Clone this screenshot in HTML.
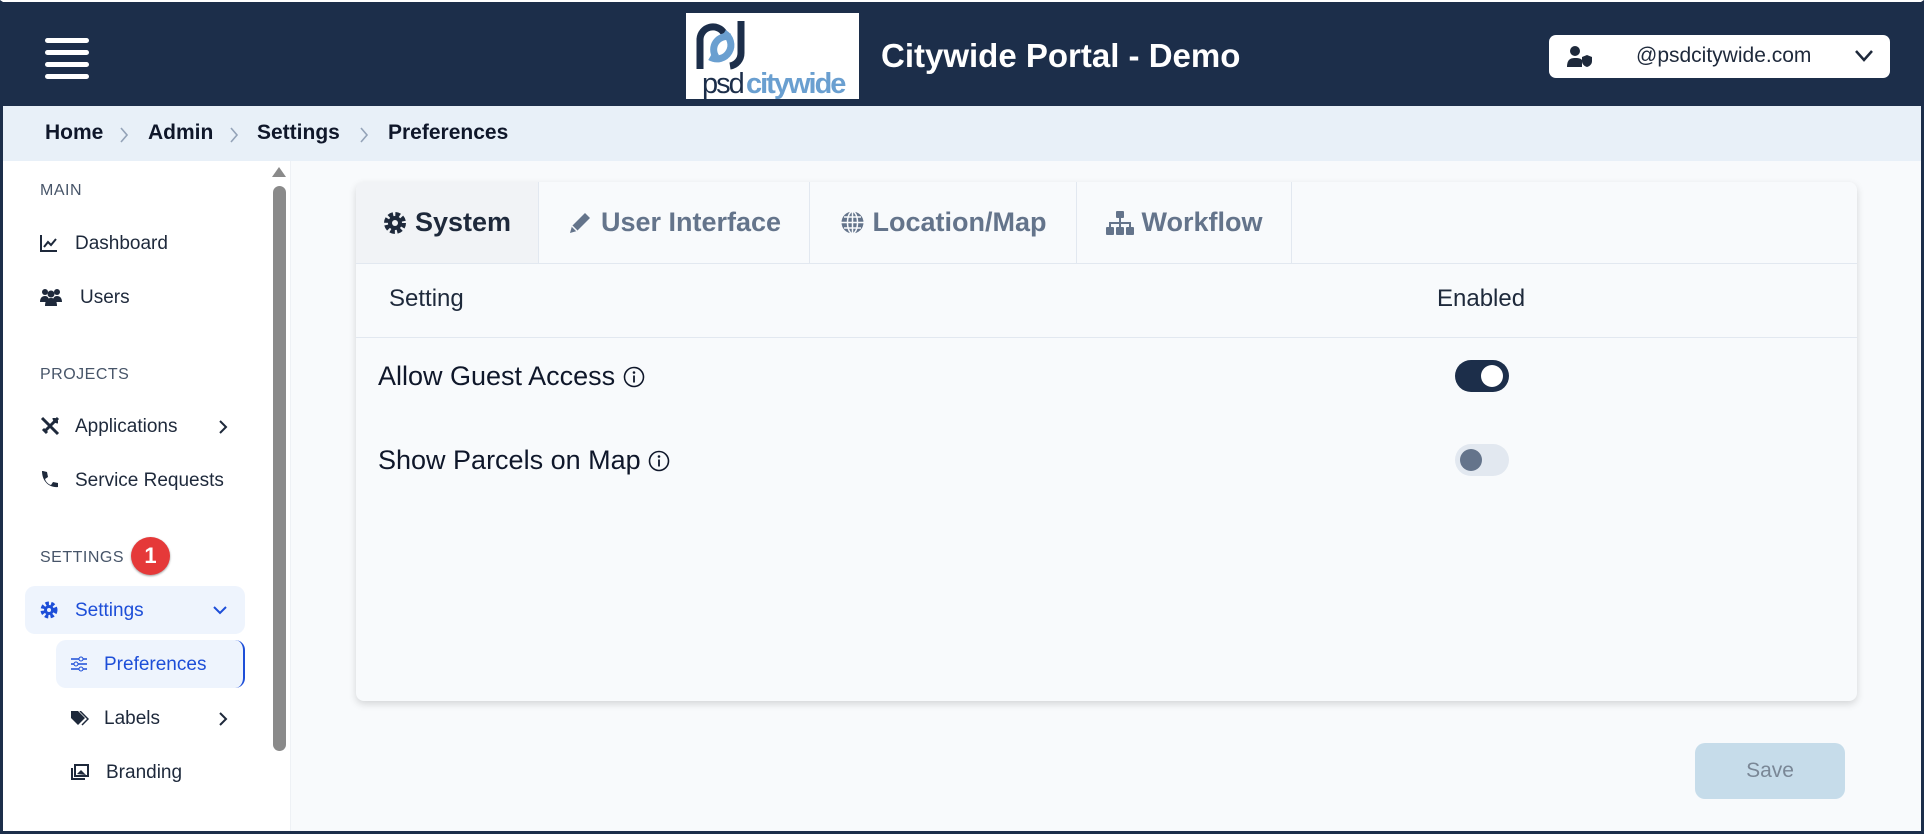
<!DOCTYPE html>
<html><head><meta charset="utf-8"><style>
*{box-sizing:border-box;margin:0;padding:0}
body{width:1924px;height:834px;overflow:hidden;font-family:"Liberation Sans",sans-serif;background:#f8fafc;position:relative;color:#1e293b}
.frame{position:absolute;inset:0;border:3px solid #1c2e4a;border-top:2px solid #fff;pointer-events:none;z-index:9}
.hdr{position:absolute;left:0;top:0;width:1924px;height:106px;background:#1c2e4a;border-top:2px solid #fff}
.burger{position:absolute;left:45px;top:36px;width:44px}
.burger i{display:block;height:5px;background:#fff;border-radius:3px;margin-bottom:7px}
.logo{position:absolute;left:686px;top:11px;width:173px;height:86px;background:#fff}
.title{position:absolute;left:881px;top:35px;color:#fff;font-weight:bold;font-size:33px}
.user{position:absolute;left:1549px;top:33px;width:341px;height:43px;background:#fff;border-radius:7px;font-size:21px;color:#1e293b}
.bc{position:absolute;left:0;top:106px;width:1924px;height:55px;background:#e8f0f8;font-size:21px;font-weight:bold;color:#0f172a}
.bc span{position:absolute;top:15px}
.bc svg{position:absolute;top:21px}
.side{position:absolute;left:0;top:161px;width:291px;height:673px;background:#fff;border-right:1px solid #eef1f5}
.sb{position:absolute;left:273px;top:25px;width:13px;height:565px;background:#8a8a8a;border-radius:7px}
.lab{position:absolute;left:40px;font-size:16px;color:#475569;letter-spacing:.5px}
.it{position:absolute;left:75px;font-size:19px;color:#1e293b}
.ic{position:absolute;left:40px}
.card{position:absolute;left:356px;top:182px;width:1501px;height:519px;background:#f8fafc;border-radius:8px;box-shadow:0 3px 8px rgba(0,0,0,.15)}
.tab{position:absolute;top:0;height:81px;border-right:1px solid #e2e8f0;font-size:27px;font-weight:bold;color:#64748b;display:flex;align-items:center;justify-content:center;gap:8px}
.row{position:absolute;left:22px;font-size:27px;color:#0f172a}
.tg{position:absolute;left:1099px;width:54px;height:32px;border-radius:16px}
</style></head><body>
<div class="hdr">
<div class="burger"><i></i><i></i><i></i><i></i></div>
<div class="logo"><svg width="173" height="86" viewBox="0 0 173 86">
<path d="M14 56 V26 a13 13 0 0 1 24 -6" stroke="#1c2e4a" stroke-width="7" fill="none"/>
<path d="M38 20 a13 13 0 0 1 -14 24" stroke="#6a9fd0" stroke-width="7" fill="none"/>
<path d="M30 44 a13 13 0 0 1 14 -20" stroke="#6a9fd0" stroke-width="7" fill="none"/>
<path d="M55 8 V40 a13 13 0 0 1 -11 13" stroke="#1c2e4a" stroke-width="7" fill="none"/>
<text x="16" y="80" font-family="Liberation Sans" font-size="29" fill="#1c2e4a" letter-spacing="-2">psd</text>
<text x="60" y="80" font-family="Liberation Sans" font-weight="bold" font-size="29" fill="#6a9fd0" letter-spacing="-2">citywide</text>
</svg></div>
<div class="title">Citywide Portal - Demo</div>
<div class="user">
<svg style="position:absolute;left:18px;top:11px" width="26" height="22" viewBox="0 0 26 22"><circle cx="8" cy="5" r="5" fill="#1e293b"/><path d="M0 21c0-7 3-9 8-9s6 1 7 2v7z" fill="#1e293b"/><path d="M15 11l5-2 5 2v4c0 3-2 5-5 6-3-1-5-3-5-6z" fill="#1e293b"/></svg>
<span style="position:absolute;left:52px;top:9px">&nbsp;&nbsp;&nbsp;&nbsp;&nbsp;&nbsp;@psdcitywide.com</span>
<svg style="position:absolute;left:305px;top:14px" width="20" height="14" viewBox="0 0 20 14"><path d="M2 2l8 9 8-9" stroke="#1e293b" stroke-width="2.5" fill="none"/></svg>
</div>
</div>
<div class="bc"><span style="left:45px">Home</span><svg style="left:119px" width="10" height="16" viewBox="0 0 10 16"><path d="M2 1l6 7-6 7" stroke="#94a3b8" stroke-width="1.6" fill="none"/></svg><span style="left:148px">Admin</span><svg style="left:229px" width="10" height="16" viewBox="0 0 10 16"><path d="M2 1l6 7-6 7" stroke="#94a3b8" stroke-width="1.6" fill="none"/></svg><span style="left:257px">Settings</span><svg style="left:359px" width="10" height="16" viewBox="0 0 10 16"><path d="M2 1l6 7-6 7" stroke="#94a3b8" stroke-width="1.6" fill="none"/></svg><span style="left:388px">Preferences</span></div>
<div class="side">
<div style="position:absolute;left:272px;top:6px;width:0;height:0;border:7px solid transparent;border-bottom:10px solid #8a8a8a;border-top:0"></div>
<div class="sb"></div>
<div class="lab" style="top:21px">MAIN</div>
<svg class="ic" style="top:73px" width="18" height="18" viewBox="0 0 18 18"><path d="M1 1v16h16M4 13l4-5 3 3 5-6" stroke="#1e293b" stroke-width="2" fill="none"/></svg>
<div class="it" style="top:72px">Dashboard</div>
<svg class="ic" style="top:127px" width="22" height="18" viewBox="0 0 22 18"><circle cx="5" cy="4" r="3" fill="#1e293b"/><circle cx="17" cy="4" r="3" fill="#1e293b"/><circle cx="11" cy="6" r="3.5" fill="#1e293b"/><path d="M0 14c0-4 2-6 5-6s4 2 4 6zM13 14c0-4 1-6 4-6s5 2 5 6zM5 18c0-5 2-8 6-8s6 3 6 8z" fill="#1e293b"/></svg>
<div class="it" style="top:126px;left:80px">Users</div>
<div class="lab" style="top:205px">PROJECTS</div>
<svg class="ic" style="top:255px" width="20" height="20" viewBox="0 0 20 20"><path d="M2 2l16 16M18 2L6 14M3 13l4 4M14 2a4 4 0 0 0 4 4" stroke="#1e293b" stroke-width="3" fill="none"/></svg>
<div class="it" style="top:255px">Applications</div>
<svg style="position:absolute;left:218px;top:258px" width="10" height="16" viewBox="0 0 10 16"><path d="M2 2l6 6-6 6" stroke="#1e293b" stroke-width="2" fill="none"/></svg>
<svg class="ic" style="top:309px" width="18" height="20" viewBox="0 0 18 20"><path d="M3 1l4 1 1 5-3 2c1 3 3 5 6 6l2-3 5 1v4c-9 1-16-6-16-16z" fill="#1e293b"/></svg>
<div class="it" style="top:309px">Service Requests</div>
<div class="lab" style="top:388px">SETTINGS</div>
<div style="position:absolute;left:131px;top:376px;width:39px;height:38px;border-radius:50%;background:#e53939;color:#fff;font-weight:bold;font-size:22px;text-align:center;line-height:38px;box-shadow:0 1px 2px rgba(0,0,0,.4)">1</div>
<div style="position:absolute;left:25px;top:425px;width:220px;height:48px;background:#eef4fd;border-radius:10px"></div>
<svg class="ic" style="top:440px" width="18" height="18" viewBox="0 0 18 18"><circle cx="9" cy="9" r="6" fill="none" stroke="#1d4ed8" stroke-width="5" stroke-dasharray="3 2"/><circle cx="9" cy="9" r="5" fill="#1d4ed8"/><circle cx="9" cy="9" r="2" fill="#eef4fd"/></svg>
<div class="it" style="top:439px;color:#1d4ed8">Settings</div>
<svg style="position:absolute;left:212px;top:444px" width="16" height="10" viewBox="0 0 16 10"><path d="M2 2l6 6 6-6" stroke="#1d4ed8" stroke-width="2" fill="none"/></svg>
<div style="position:absolute;left:56px;top:479px;width:189px;height:48px;background:#eef4fd;border-radius:10px;border-right:2px solid #1d4ed8"></div>
<svg style="position:absolute;left:71px;top:495px" width="16" height="16" viewBox="0 0 16 16"><path d="M0 3h16M0 8h16M0 13h16" stroke="#1d4ed8" stroke-width="1.6"/><circle cx="10" cy="3" r="2" fill="#eef4fd" stroke="#1d4ed8"/><circle cx="5" cy="8" r="2" fill="#eef4fd" stroke="#1d4ed8"/><circle cx="10" cy="13" r="2" fill="#eef4fd" stroke="#1d4ed8"/></svg>
<div class="it" style="top:493px;left:104px;color:#1d4ed8">Preferences</div>
<svg style="position:absolute;left:71px;top:550px" width="18" height="16" viewBox="0 0 18 16"><path d="M0 0h7l7 7-7 7-7-7z" fill="#1e293b"/><path d="M9 0l8 8-6 6" stroke="#1e293b" stroke-width="1.5" fill="none"/></svg>
<div class="it" style="top:547px;left:104px">Labels</div>
<svg style="position:absolute;left:218px;top:550px" width="10" height="16" viewBox="0 0 10 16"><path d="M2 2l6 6-6 6" stroke="#1e293b" stroke-width="2" fill="none"/></svg>
<svg style="position:absolute;left:71px;top:603px" width="18" height="16" viewBox="0 0 18 16"><rect x="4" y="1" width="13" height="11" fill="none" stroke="#1e293b" stroke-width="2"/><path d="M1 4v11h13" stroke="#1e293b" stroke-width="2" fill="none"/><path d="M6 10l4-4 5 5z" fill="#1e293b"/></svg>
<div class="it" style="top:601px;left:106px">Branding</div>
</div>
<div class="card">
<div class="tab" style="left:0;width:183px;background:#f1f3f6;color:#1e293b;border-radius:8px 0 0 0"><svg width="24" height="24" viewBox="0 0 24 24"><circle cx="12" cy="12" r="8" fill="none" stroke="#1e293b" stroke-width="6" stroke-dasharray="4.2 2.1"/><circle cx="12" cy="12" r="7" fill="#1e293b"/><circle cx="12" cy="12" r="3" fill="#f1f3f6"/></svg>System</div>
<div class="tab" style="left:183px;width:271px"><svg width="26" height="26" viewBox="0 0 26 26"><path d="M3 23l2-7L18 3l5 5L10 21z" fill="#64748b"/><path d="M5 16l5 5" stroke="#f8fafc" stroke-width="1.5"/></svg>User Interface</div>
<div class="tab" style="left:454px;width:267px"><svg width="25" height="25" viewBox="0 0 25 25"><circle cx="12.5" cy="12.5" r="11" fill="#64748b"/><path d="M1.5 12.5h22M12.5 1.5v22M4 7h17M4 18h17" stroke="#f8fafc" stroke-width="1.5"/><ellipse cx="12.5" cy="12.5" rx="5" ry="11" fill="none" stroke="#f8fafc" stroke-width="1.5"/></svg>Location/Map</div>
<div class="tab" style="left:721px;width:215px"><svg width="28" height="24" viewBox="0 0 28 24"><rect x="10" y="0" width="8" height="7" rx="1" fill="#64748b"/><path d="M14 7v5M4 17v-5h20v5M14 12v5" stroke="#64748b" stroke-width="2" fill="none"/><rect x="0" y="16" width="8" height="8" rx="1" fill="#64748b"/><rect x="10" y="16" width="8" height="8" rx="1" fill="#64748b"/><rect x="20" y="16" width="8" height="8" rx="1" fill="#64748b"/></svg>Workflow</div>
<div style="position:absolute;left:0;top:81px;width:1501px;border-top:1px solid #e2e8f0"></div>
<div style="position:absolute;left:33px;top:103px;font-size:24px;color:#1e293b">Setting</div>
<div style="position:absolute;left:1081px;top:103px;font-size:24px;color:#1e293b">Enabled</div>
<div style="position:absolute;left:0;top:155px;width:1501px;border-top:1px solid #e2e8f0"></div>
<div class="row" style="top:179px">Allow Guest Access <svg width="22" height="22" viewBox="0 0 22 22" style="vertical-align:-3px"><circle cx="11" cy="11" r="9.5" fill="none" stroke="#0f172a" stroke-width="1.6"/><circle cx="11" cy="6.5" r="1.3" fill="#0f172a"/><path d="M11 9.5v7" stroke="#0f172a" stroke-width="1.8"/></svg></div>
<div class="tg" style="top:178px;background:#1c2e4a"><div style="position:absolute;left:26px;top:5px;width:22px;height:22px;border-radius:50%;background:#fff"></div></div>
<div class="row" style="top:263px">Show Parcels on Map <svg width="22" height="22" viewBox="0 0 22 22" style="vertical-align:-3px"><circle cx="11" cy="11" r="9.5" fill="none" stroke="#0f172a" stroke-width="1.6"/><circle cx="11" cy="6.5" r="1.3" fill="#0f172a"/><path d="M11 9.5v7" stroke="#0f172a" stroke-width="1.8"/></svg></div>
<div class="tg" style="top:262px;background:#e2e8f0"><div style="position:absolute;left:5px;top:5px;width:22px;height:22px;border-radius:50%;background:#64748b"></div></div>
</div>
<div style="position:absolute;left:1695px;top:743px;width:150px;height:56px;background:#c6dcea;border-radius:10px;color:#7a8796;font-size:21px;text-align:center;line-height:56px">Save</div>
<div class="frame"></div>
</body></html>
